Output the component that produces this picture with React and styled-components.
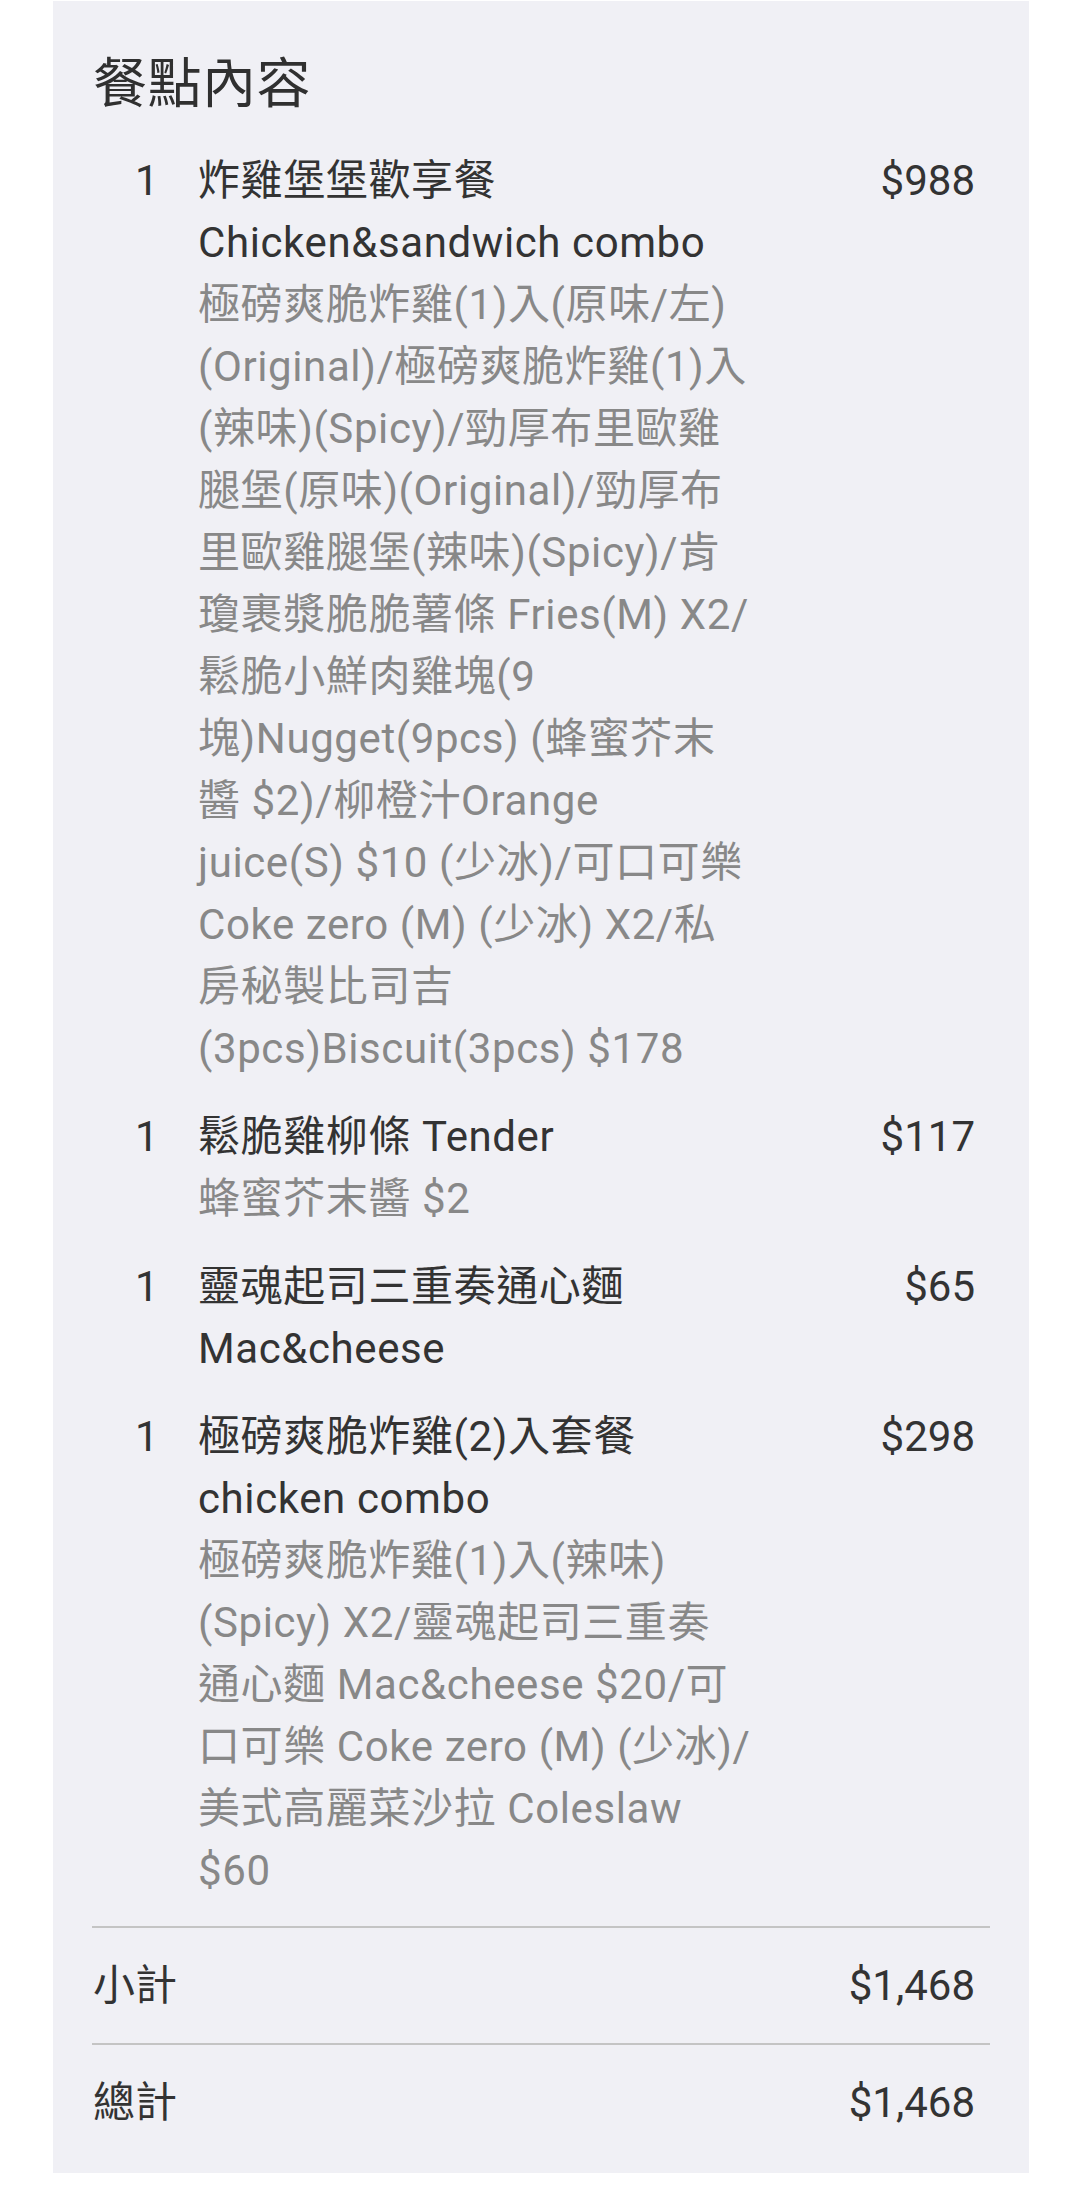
import React from "react";
import styled, { createGlobalStyle } from "styled-components";

const GlobalStyle = createGlobalStyle`
  html, body {
    margin: 0;
    padding: 0;
    background: #ffffff;
  }
  body {
    font-family: Roboto, "Noto Sans CJK TC", "Noto Sans", sans-serif;
    -webkit-font-smoothing: antialiased;
  }
`;

const Panel = styled.section`
  box-sizing: border-box;
  width: 976px;
  margin: 1px 0 0 53px;
  padding: 0 39px 13px 39px;
  background: #f0f0f5;
  color: #333333;
`;

const Title = styled.h2`
  margin: 0;
  padding: 46px 0 14px 1px;
  font-size: 54px;
  line-height: 76px;
  font-weight: 400;
  letter-spacing: 0.5px;
  color: #303030;
`;

const ItemList = styled.div`
  display: flex;
  flex-direction: column;
  padding-bottom: 11px;
`;

const ItemRow = styled.div`
  display: grid;
  grid-template-columns: 106px 1fr auto;
  padding: 13px 15px 13px 0;
  font-size: 42px;
  line-height: 62px;
`;

const Qty = styled.div`
  padding-left: 43px;
  color: #333333;
`;

const Body = styled.div`
  display: flex;
  flex-direction: column;
  min-width: 0;
  letter-spacing: 0.6px;
`;

const Line = styled.span`
  display: block;
  white-space: nowrap;
  color: ${(p) => (p.$muted ? "#888888" : "#333333")};
`;

const Price = styled.div`
  text-align: right;
  color: #333333;
`;

const Divider = styled.hr`
  margin: 0;
  border: 0;
  height: 2px;
  background: #c4c4c4;
`;

const TotalRow = styled.div`
  display: flex;
  justify-content: space-between;
  align-items: center;
  padding: 27px 15px 26px 1px;
  font-size: 42px;
  line-height: 62px;
  color: #333333;
`;

const items = [
  {
    qty: 1,
    name: ["炸雞堡堡歡享餐", "Chicken&sandwich combo"],
    price: "$988",
    desc: [
      "極磅爽脆炸雞(1)入(原味/左)",
      "(Original)/極磅爽脆炸雞(1)入",
      "(辣味)(Spicy)/勁厚布里歐雞",
      "腿堡(原味)(Original)/勁厚布",
      "里歐雞腿堡(辣味)(Spicy)/肯",
      "瓊裹漿脆脆薯條 Fries(M) X2/",
      "鬆脆小鮮肉雞塊(9",
      "塊)Nugget(9pcs) (蜂蜜芥末",
      "醬 $2)/柳橙汁Orange",
      "juice(S) $10 (少冰)/可口可樂",
      "Coke zero (M) (少冰) X2/私",
      "房秘製比司吉",
      "(3pcs)Biscuit(3pcs) $178",
    ],
  },
  {
    qty: 1,
    name: ["鬆脆雞柳條 Tender"],
    price: "$117",
    desc: ["蜂蜜芥末醬 $2"],
  },
  {
    qty: 1,
    name: ["靈魂起司三重奏通心麵", "Mac&cheese"],
    price: "$65",
    desc: [],
  },
  {
    qty: 1,
    name: ["極磅爽脆炸雞(2)入套餐", "chicken combo"],
    price: "$298",
    desc: [
      "極磅爽脆炸雞(1)入(辣味)",
      "(Spicy) X2/靈魂起司三重奏",
      "通心麵 Mac&cheese $20/可",
      "口可樂 Coke zero (M) (少冰)/",
      "美式高麗菜沙拉 Coleslaw",
      "$60",
    ],
  },
];

export default function App() {
  return (
    <>
      <GlobalStyle />
      <Panel>
        <Title>餐點內容</Title>
        <ItemList>
          {items.map((item, i) => (
            <ItemRow key={i}>
              <Qty>{item.qty}</Qty>
              <Body>
                {item.name.map((l, j) => (
                  <Line key={"n" + j}>{l}</Line>
                ))}
                {item.desc.map((l, j) => (
                  <Line key={"d" + j} $muted>
                    {l}
                  </Line>
                ))}
              </Body>
              <Price>{item.price}</Price>
            </ItemRow>
          ))}
        </ItemList>
        <Divider />
        <TotalRow>
          <span>小計</span>
          <span>$1,468</span>
        </TotalRow>
        <Divider />
        <TotalRow>
          <span>總計</span>
          <span>$1,468</span>
        </TotalRow>
      </Panel>
    </>
  );
}
